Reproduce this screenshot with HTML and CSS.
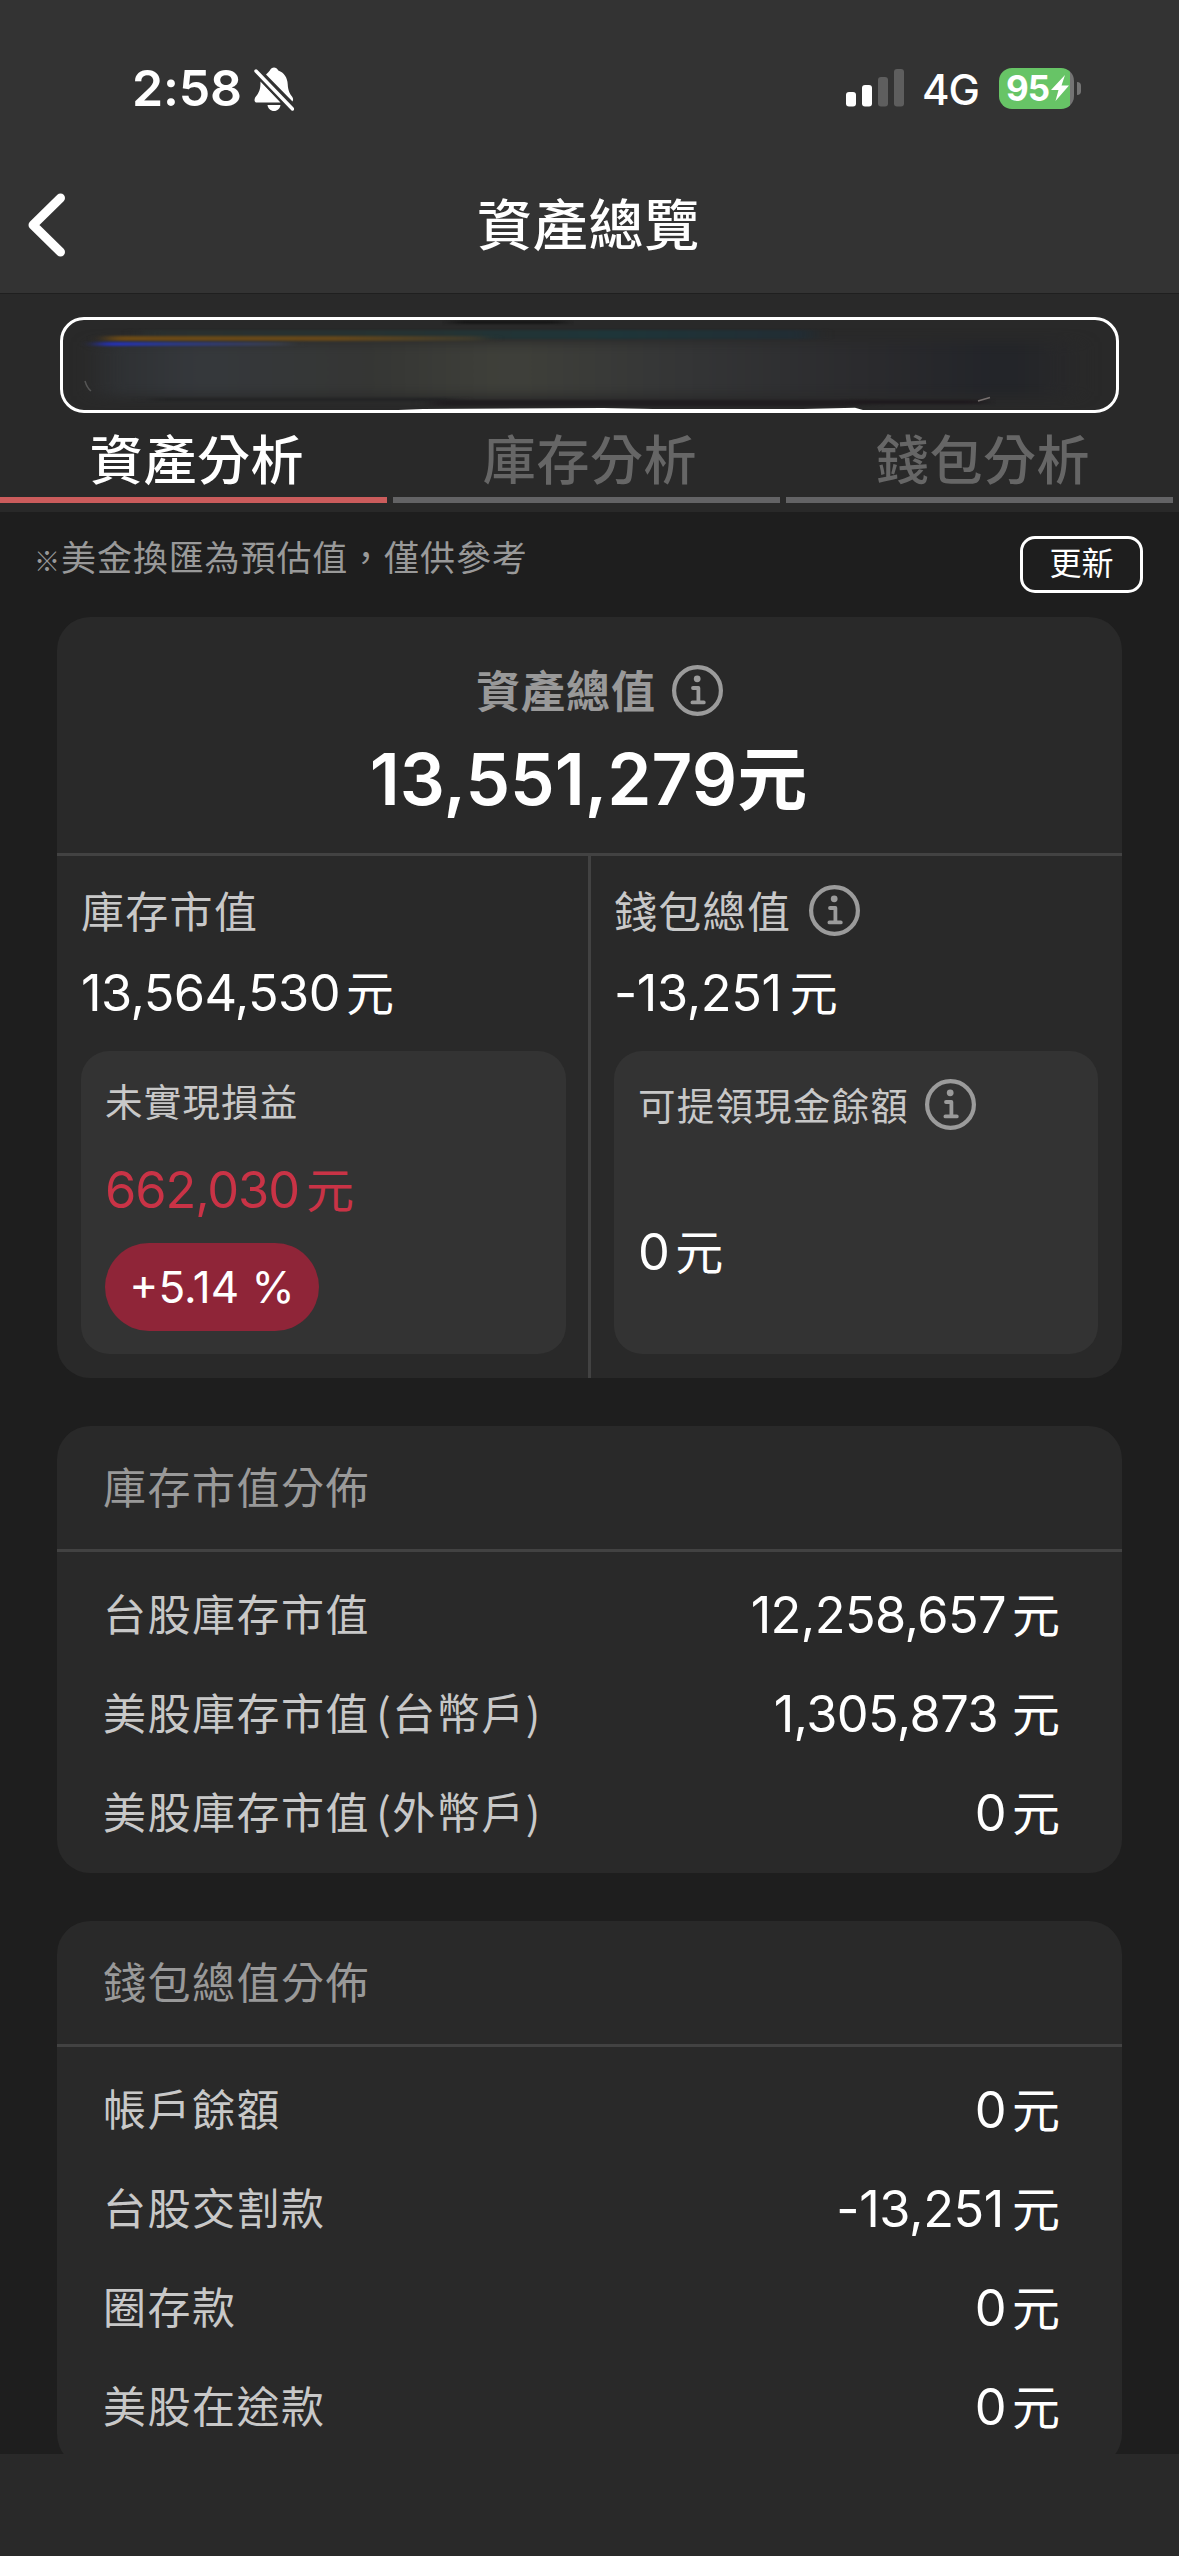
FILE: index.html
```html
<!DOCTYPE html>
<html lang="zh-Hant">
<head>
<meta charset="utf-8">
<title>資產總覽</title>
<link rel="stylesheet" href="styles.css">
</head>
<body>
<svg class="defs" width="0" height="0" aria-hidden="true">
  <symbol id="info" viewBox="0 0 51 51">
    <circle cx="25.500" cy="25.500" r="23.400" fill="none" stroke="currentColor" stroke-width="4.200"/>
    <circle cx="25.200" cy="13.800" r="3.400" fill="currentColor"/>
    <path d="M21 23h5.400v14.400M20.400 37.400h11.400" fill="none" stroke="currentColor" stroke-width="3.800" stroke-linecap="round" stroke-linejoin="round"/>
  </symbol>
</svg>
<div class="screen">
  <header class="top">
    <div class="status">
      <div class="status-left">
        <span class="time">2:58</span>
        <svg class="bell" viewBox="0 0 40 44" width="40" height="44">
          <path fill="#fff" d="M12 7.500C14 5.500 15 4.500 15.800 3.500C17.500-.500 22.500-.500 24.300 3.500C30 5.500 33.500 11 33.700 17C34 24 36 27 38 29.500C39.500 31.500 39.300 33 38.500 34.500Z"/>
          <path fill="#fff" d="M6.500 14.500L26.500 35.600H3C0 35.600 0 32 1.500 30C5 25.500 6.500 23 6.500 14.500Z"/>
          <path fill="#fff" d="M13.500 38H26.500C26 41.500 23.500 44 20 44S14 41.500 13.500 38Z"/>
          <path d="M2 4L38.500 42" stroke="#333" stroke-width="7.500"/>
          <path d="M2 4L38.500 42" stroke="#fff" stroke-width="3.400" stroke-linecap="round"/>
        </svg>
      </div>
      <div class="status-right">
        <svg class="signal" viewBox="0 0 58 38" width="58" height="38">
          <rect x="0" y="23" width="10" height="14.500" rx="3" fill="#fff"/>
          <rect x="16" y="16" width="10" height="21.500" rx="3" fill="#fff"/>
          <rect x="32" y="8" width="10" height="29.500" rx="3" fill="#5e5e5e"/>
          <rect x="48" y="0" width="10" height="37.500" rx="3" fill="#5e5e5e"/>
        </svg>
        <span class="net">4G</span>
        <div class="battery">
          <span class="level">95</span>
          <svg viewBox="0 0 18 26" width="18" height="26"><path fill="#fff" d="M14 0L0 15H7.500L4.500 26L18 10.500H10.500Z"/></svg>
        </div>
        <i class="nub"></i>
      </div>
    </div>
    <div class="nav">
      <svg class="back" viewBox="0 0 38 64" width="38" height="64"><path d="M32.500 5L5 32L32.500 59" fill="none" stroke="#fff" stroke-width="9" stroke-linecap="round" stroke-linejoin="round"/></svg>
      <h1>資產總覽</h1>
    </div>
  </header>

  <section class="account">
    <div class="picker">
      <svg viewBox="0 0 1053 90" width="1053" height="90" preserveAspectRatio="none">
        <defs>
          <filter id="soft" x="-10%" y="-80%" width="120%" height="260%" color-interpolation-filters="sRGB"><feGaussianBlur stdDeviation="12 6"/></filter>
          <filter id="thin" x="-10%" y="-300%" width="120%" height="700%" color-interpolation-filters="sRGB"><feGaussianBlur stdDeviation="9 1.200"/></filter>
          <linearGradient id="band"><stop offset="0" stop-color="#2d2f31"/><stop offset=".1" stop-color="#35383c"/><stop offset=".28" stop-color="#353634"/><stop offset=".42" stop-color="#3f403a"/><stop offset=".6" stop-color="#343536"/><stop offset=".8" stop-color="#2a2a2d"/><stop offset=".93" stop-color="#222429"/><stop offset="1" stop-color="#29292a"/></linearGradient>
          <linearGradient id="teal"><stop offset="0" stop-color="#2a2f2e"/><stop offset=".4" stop-color="#253232"/><stop offset=".7" stop-color="#1e3539"/><stop offset="1" stop-color="#222c33"/></linearGradient>
          <linearGradient id="amber"><stop offset="0" stop-color="#6c4a16"/><stop offset=".6" stop-color="#64471a"/><stop offset="1" stop-color="#39392f"/></linearGradient>
          <linearGradient id="blue"><stop offset="0" stop-color="#2430c0"/><stop offset=".35" stop-color="#2b3987"/><stop offset="1" stop-color="#3a3d42"/></linearGradient>
        </defs>
        <rect x="35" y="22" width="975" height="54" fill="url(#band)" filter="url(#soft)"/>
        <rect x="80" y="10" width="670" height="9" fill="url(#teal)" filter="url(#thin)"/>
        <rect x="45" y="16" width="375" height="5" fill="url(#amber)" filter="url(#thin)"/>
        <rect x="36" y="22" width="190" height="4" fill="url(#blue)" filter="url(#thin)"/>
        <rect x="390" y="1" width="110" height="2.500" fill="#111" filter="url(#thin)"/>
        <rect x="90" y="78" width="300" height="3" fill="#222324" filter="url(#thin)"/>
        <rect x="370" y="80" width="430" height="6" fill="#201d20" filter="url(#thin)"/>
        <rect x="790" y="80" width="130" height="4" fill="#1e191d" filter="url(#thin)"/>
        <path d="M335 90L360 89L540 88L590 89L740 89L792 87.800L800 90Z" fill="#fff"/>
        <path d="M915 81l12-3.500" stroke="#77706f" stroke-width="1.500"/>
        <path d="M22 61q2 7 6 10" fill="none" stroke="#555" stroke-width="1.500"/>
      </svg>
    </div>
    <nav class="tabs">
      <a class="tab active">資產分析</a>
      <a class="tab">庫存分析</a>
      <a class="tab">錢包分析</a>
    </nav>
  </section>

  <main class="content">
    <div class="notice">
      <p><span class="mark">※</span>美金換匯為預估值，僅供參考</p>
      <button class="refresh">更新</button>
    </div>

    <section class="card summary">
      <div class="total">
        <div class="total-label"><span>資產總值</span><svg class="info" width="51" height="51"><use href="#info"/></svg></div>
        <div class="total-value">13,551,279<span class="unit">元</span></div>
      </div>
      <div class="split">
        <div class="col">
          <div class="label"><span>庫存市值</span></div>
          <div class="value"><span>13,564,530</span><span class="yuan">元</span></div>
          <div class="box">
            <div class="box-label"><span>未實現損益</span></div>
            <div class="value red"><span>662,030</span><span class="yuan">元</span></div>
            <div class="pill">+5.14 %</div>
          </div>
        </div>
        <div class="col">
          <div class="label"><span>錢包總值</span><svg class="info" width="51" height="51"><use href="#info"/></svg></div>
          <div class="value negative"><span>-13,251</span><span class="yuan">元</span></div>
          <div class="box cash">
            <div class="box-label"><span>可提領現金餘額</span><svg class="info" width="51" height="51"><use href="#info"/></svg></div>
            <div class="value"><span>0</span><span class="yuan">元</span></div>
          </div>
        </div>
      </div>
    </section>

    <section class="card list">
      <h2>庫存市值分佈</h2>
      <div class="rows">
        <div class="row"><span class="name">台股庫存市值</span><div class="value"><span>12,258,657</span><span class="yuan">元</span></div></div>
        <div class="row"><span class="name">美股庫存市值 (台幣戶)</span><div class="value spaced"><span>1,305,873</span><span class="yuan">元</span></div></div>
        <div class="row"><span class="name">美股庫存市值 (外幣戶)</span><div class="value"><span>0</span><span class="yuan">元</span></div></div>
      </div>
    </section>

    <section class="card list">
      <h2>錢包總值分佈</h2>
      <div class="rows">
        <div class="row"><span class="name">帳戶餘額</span><div class="value"><span>0</span><span class="yuan">元</span></div></div>
        <div class="row"><span class="name">台股交割款</span><div class="value negative"><span>-13,251</span><span class="yuan">元</span></div></div>
        <div class="row"><span class="name">圈存款</span><div class="value"><span>0</span><span class="yuan">元</span></div></div>
        <div class="row"><span class="name">美股在途款</span><div class="value"><span>0</span><span class="yuan">元</span></div></div>
      </div>
    </section>
  </main>
  <footer class="bottom"></footer>
</div>
</body>
</html>
```
FILE: styles.css
```css
* { box-sizing: border-box; margin: 0; padding: 0; }
body { background: #1e1e1e; }
.defs { position: absolute; }
svg { display: block; flex: none; }
.screen {
  width: 1179px; height: 2556px; overflow: hidden;
  display: flex; flex-direction: column;
  font-family: Inter, "Noto Sans CJK TC", sans-serif;
  color: #fff; background: #1e1e1e; white-space: nowrap;
}

.top { height: 294px; flex: none; background: #333; border-bottom: 1px solid #1f1f1f; }
.status { height: 176px; padding: 0 98px 0 132px; display: flex; justify-content: space-between; align-items: center; }
.status-left, .status-right { display: flex; align-items: center; }
.time { font-size: 50px; line-height: 60px; font-weight: 600; width: 122px; letter-spacing: -.2px; }
.bell { margin-top: 1px; }
.net { font-size: 42px; line-height: 50px; font-weight: 500; margin-left: 18px; width: 77px; padding-top: 3px; letter-spacing: -1px; }
.battery {
  width: 75px; height: 41px; border-radius: 13px; padding-left: 7px;
  display: flex; align-items: center;
  background: linear-gradient(90deg, #67c466 71px, #747474 71px);
}
.level { font-size: 35px; line-height: 41px; font-weight: 700; width: 45px; letter-spacing: -1px; }
.nub { width: 4px; height: 13px; margin-left: 3px; border-radius: 0 5px 5px 0; background: #747474; }
.nav { height: 97px; display: grid; grid-template-columns: 38px 1fr 38px; align-items: center; padding: 0 28px; }
.nav h1 { font-size: 55px; line-height: 80px; font-weight: 500; letter-spacing: .8px; text-align: center; padding-right: 2px; }

.account { height: 218px; flex: none; background: #292929; padding-top: 23px; }
.picker { margin: 0 60px; height: 96px; border: 3px solid #fff; border-radius: 24px; overflow: hidden; }
.tabs { display: flex; gap: 6px; margin-top: 1px; padding-right: 6px; }
.tab {
  flex: 1; height: 89px; padding: 7px 0 0 7px; border-bottom: 6px solid #636365;
  font-size: 53px; line-height: 80px; font-weight: 500; text-align: center; letter-spacing: .6px; color: #666;
}
.tab.active { color: #fff; border-color: #cb5c5c; }

.content { height: 1942px; flex: none; overflow: hidden; }
.notice { height: 105px; padding: 24px 36px 0 34px; display: flex; justify-content: space-between; align-items: flex-start; }
.notice p { font-size: 35px; line-height: 44px; letter-spacing: .9px; color: #999; }
.mark { display: inline-block; width: 27px; font-family: "Noto Sans CJK TC", sans-serif; font-size: 26px; line-height: 30px; letter-spacing: 0; }
.refresh {
  width: 123px; height: 57px; border: 3px solid #fff; border-radius: 15px; background: none; padding-bottom: 1px;
  font: 400 32px/48px Inter, "Noto Sans CJK TC", sans-serif; color: #fff;
}

.card { margin: 0 57px 48px; background: #292929; border-radius: 33px; overflow: hidden; }
.info { color: #9b9b9b; }
.total { height: 239px; border-bottom: 3px solid #424242; padding-top: 48px; }
.total-label {
  display: flex; align-items: center; justify-content: center; gap: 16px; padding-left: 20px;
  height: 51px; font-size: 44px; font-weight: 700; letter-spacing: .9px; color: #999;
}
.total-label span, .label span, .box-label span { padding-bottom: 3px; }
.total-value { margin-top: 18px; padding-right: 2px; line-height: 90px; font-size: 71px; font-weight: 600; text-align: center; }
.unit { font-size: 70px; }
.split { display: grid; grid-template-columns: 534px 531px; height: 522px; }
.col { padding: 29px 24px 24px 23px; }
.col:first-child { padding: 29px 22px 24px 24px; border-right: 3px solid #424242; }
.label { height: 51px; display: flex; align-items: center; gap: 18px; font-size: 43px; letter-spacing: 1.300px; color: #c8c8c8; }
.value { display: flex; align-items: center; gap: 6px; height: 60px; font-size: 50.500px; letter-spacing: -.600px; font-weight: 400; }
.yuan { font-size: 48px; letter-spacing: 0; padding-bottom: 5px; }
.col > .value { margin-top: 26px; }
.row .value { padding-top: 1px; }
.negative { gap: 8px; letter-spacing: -.400px; }
.spaced { gap: 14px; }
.box { margin-top: 29px; height: 303px; padding: 24px; border-radius: 28px; background: #333; }
.box-label { height: 51px; display: flex; align-items: center; gap: 16px; font-size: 37.500px; letter-spacing: 1.200px; color: #c8c8c8; }
.box .red { color: #c93346; margin-top: 33px; letter-spacing: -1.100px; gap: 7px; }
.pill {
  margin-top: 24px; width: 214px; height: 88px; border-radius: 44px; background: #8f2538;
  font-size: 44px; line-height: 88px; text-align: center;
}
.cash .value { margin-top: 91px; }
.cash .box-label { margin-top: 4px; }

.list h2 { height: 126px; border-bottom: 3px solid #424242; padding-left: 46px; font-size: 43px; line-height: 125px; font-weight: 400; letter-spacing: 1.500px; color: #999; }
.rows { padding: 12px 62px 12px 46px; }
.row { height: 99px; display: flex; align-items: center; justify-content: space-between; }
.name { font-family: "Noto Sans CJK TC", sans-serif; font-size: 43px; line-height: 60px; padding-bottom: 3px; letter-spacing: 1.500px; word-spacing: -5px; color: #c8c8c8; }
.bottom { height: 102px; flex: none; background: #292929; }
```
